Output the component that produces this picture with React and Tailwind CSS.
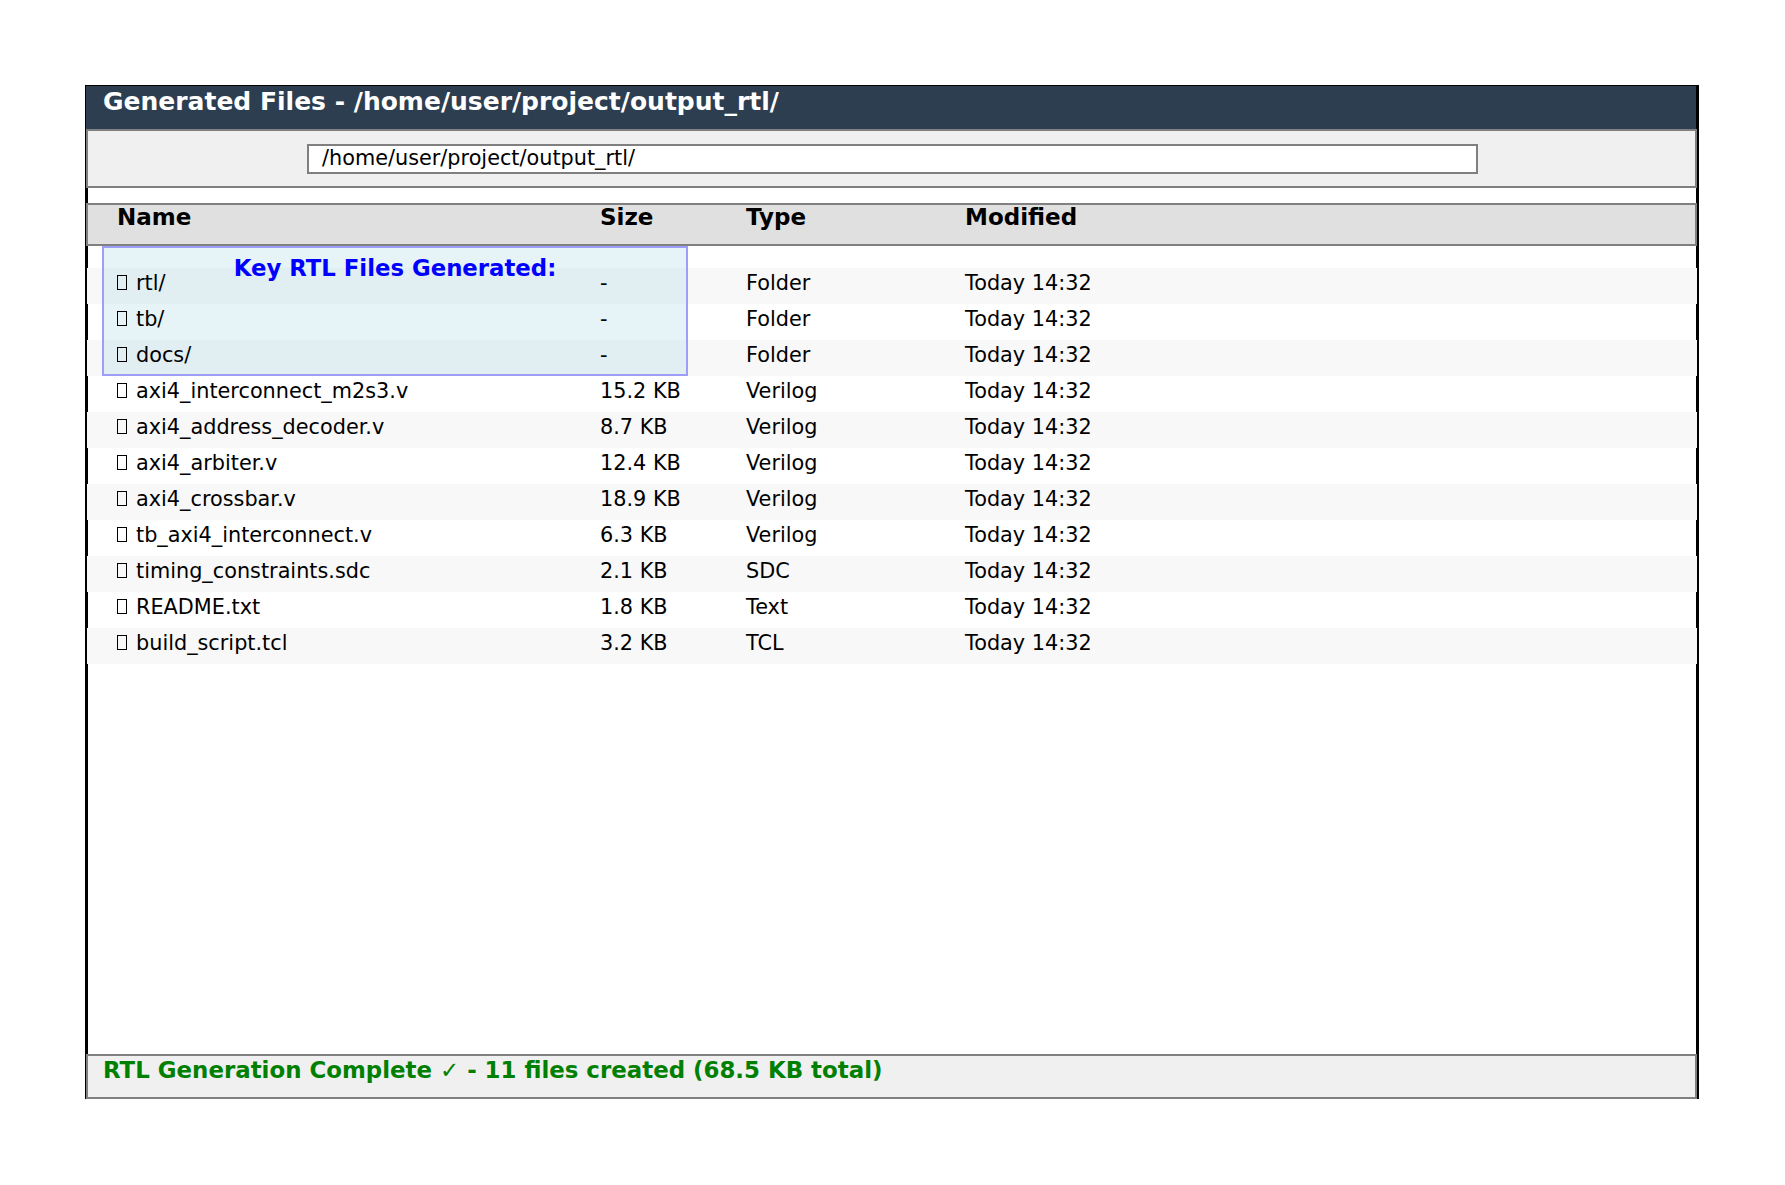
import React from "react";

const rows = [
  ["rtl/", "-", "Folder"],
  ["tb/", "-", "Folder"],
  ["docs/", "-", "Folder"],
  ["axi4_interconnect_m2s3.v", "15.2 KB", "Verilog"],
  ["axi4_address_decoder.v", "8.7 KB", "Verilog"],
  ["axi4_arbiter.v", "12.4 KB", "Verilog"],
  ["axi4_crossbar.v", "18.9 KB", "Verilog"],
  ["tb_axi4_interconnect.v", "6.3 KB", "Verilog"],
  ["timing_constraints.sdc", "2.1 KB", "SDC"],
  ["README.txt", "1.8 KB", "Text"],
  ["build_script.tcl", "3.2 KB", "TCL"],
];

export default function App() {
  return (
    <div
      className="w-[1785px] h-[1185px] bg-white pt-[85px] pl-[85px] overflow-hidden text-black"
      style={{ fontFamily: '"DejaVu Sans", sans-serif' }}
    >
      <div className="relative w-[1614px] h-[1014px] border-[3px] border-b-0 border-black flex flex-col">
        {/* Title bar */}
        <div className="-mt-[2px] -ml-[2px] h-[43px] bg-[#2c3e50] pl-[17px] shrink-0 overflow-hidden">
          <div className="-mt-[3px] text-[25px] font-bold text-white leading-normal">
            Generated Files - /home/user/project/output_rtl/
          </div>
        </div>

        {/* Address panel */}
        <div className="-ml-[2px] -mr-[1px] h-[59px] shrink-0 border-2 border-[#808080] bg-[#f0f0f0] pl-[219px] pt-[13px]">
          <div className="w-[1171px] h-[30px] border-2 border-[#808080] bg-white pl-[13px] flex items-center text-[20.8px] leading-normal">
            /home/user/project/output_rtl/
          </div>
        </div>

        {/* Column header */}
        <div className="mt-[15px] -ml-[2px] -mr-[1px] h-[43px] shrink-0 border-2 border-[#808080] bg-[#e0e0e0] pl-[29px]">
          <div className="-mt-[5px] flex items-start text-[23px] font-bold leading-normal">
            <span className="w-[483px]">Name</span>
            <span className="w-[146px]">Size</span>
            <span className="w-[219px]">Type</span>
            <span>Modified</span>
          </div>
        </div>

        {/* File rows */}
        <div className="mt-[22px] flex flex-col shrink-0">
          {rows.map(([name, size, type], i) => (
            <div
              key={name}
              className={
                "h-[36px] -ml-[1px] -mr-[1px] pl-[30px] pb-[4px] flex items-center text-[20.8px] leading-normal " +
                (i % 2 === 0 ? "bg-[#f8f8f8]" : "bg-transparent")
              }
            >
              <span className="relative z-[1] w-[483px] whitespace-nowrap">
                <span className="inline-block w-[10px] h-[15px] border border-black mr-[9px] align-baseline"></span>
                {name}
              </span>
              <span className="relative z-[1] w-[146px]">{size}</span>
              <span className="relative z-[1] w-[219px]">{type}</span>
              <span className="relative z-[1]">Today 14:32</span>
            </div>
          ))}
        </div>

        {/* Key overlay */}
        <div className="absolute z-0 left-[14px] top-[158px] w-[586px] h-[130px] border-2 border-[#9d9dfa] bg-[#add8e6]/30 pt-[3px] text-center">
          <span className="relative z-[2] text-[22.8px] font-bold text-[#0000ff] leading-normal">
            Key RTL Files Generated:
          </span>
        </div>

        {/* Footer */}
        <div className="mt-auto -ml-[2px] -mr-[1px] h-[45px] shrink-0 border-2 border-[#808080] bg-[#f0f0f0] pl-[15px] overflow-hidden">
          <div className="-mt-[3px] text-[22.9px] font-bold text-[#008000] leading-normal">
            RTL Generation Complete ✓ - 11 files created (68.5 KB total)
          </div>
        </div>
      </div>
    </div>
  );
}
